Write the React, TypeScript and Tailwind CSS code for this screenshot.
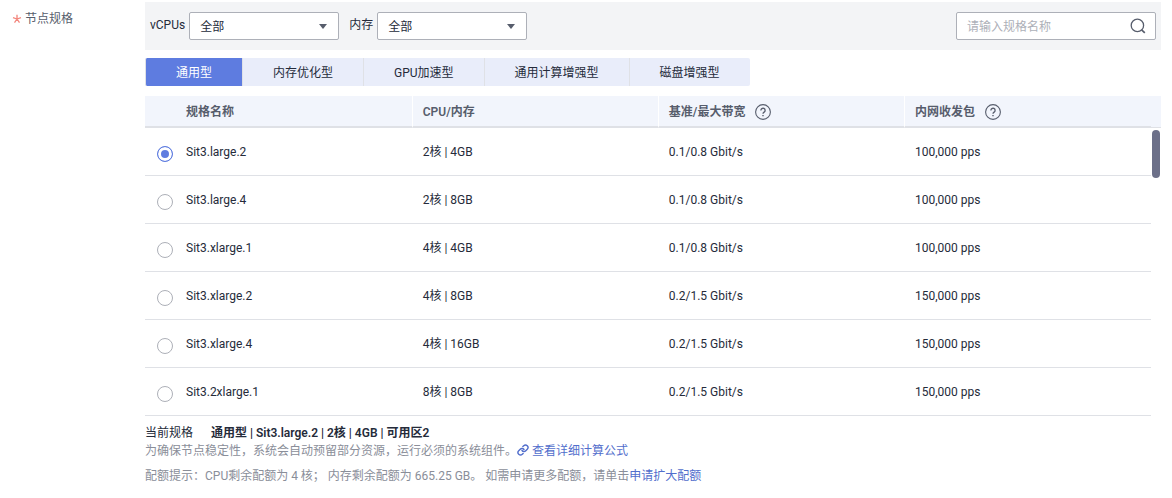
import { useState } from "react";
import type { ReactNode } from "react";

const TABS = ["通用型", "内存优化型", "GPU加速型", "通用计算增强型", "磁盘增强型"];

const SPECS = [
  { name: "Sit3.large.2", size: "2核 | 4GB", bandwidth: "0.1/0.8 Gbit/s", pps: "100,000 pps" },
  { name: "Sit3.large.4", size: "2核 | 8GB", bandwidth: "0.1/0.8 Gbit/s", pps: "100,000 pps" },
  { name: "Sit3.xlarge.1", size: "4核 | 4GB", bandwidth: "0.1/0.8 Gbit/s", pps: "100,000 pps" },
  { name: "Sit3.xlarge.2", size: "4核 | 8GB", bandwidth: "0.2/1.5 Gbit/s", pps: "150,000 pps" },
  { name: "Sit3.xlarge.4", size: "4核 | 16GB", bandwidth: "0.2/1.5 Gbit/s", pps: "150,000 pps" },
  { name: "Sit3.2xlarge.1", size: "8核 | 8GB", bandwidth: "0.2/1.5 Gbit/s", pps: "150,000 pps" },
];

function FilterSelect({ id, label }: { id: string; label: string }) {
  return (
    <div className="flex items-center gap-1">
      <label htmlFor={id} className="pb-0.5">
        {label}
      </label>
      <div className="relative">
        <select
          id={id}
          className="block h-7 w-[150px] appearance-none rounded-xs border border-[#adb0b8] bg-white pt-0.5 pr-7 pl-[10px] outline-none"
        >
          <option>全部</option>
        </select>
        <svg
          viewBox="0 0 8 5"
          className="pointer-events-none absolute top-3 right-3 h-[5px] w-2"
          fill="#575d6c"
          aria-hidden="true"
        >
          <path d="M0 0h8L4 5z" />
        </svg>
      </div>
    </div>
  );
}

function HelpButton({ label }: { label: string }) {
  return (
    <button type="button" aria-label={label} className="block size-4">
      <svg viewBox="0 0 16 16" className="size-4" fill="none" stroke="#575d6c" aria-hidden="true">
        <circle cx="8" cy="8" r="7.4" strokeWidth="1.1" />
        <path d="M5.900 6.400a2.100 2.100 0 1 1 3.400 1.600c-.8.6-1.300.9-1.300 1.800" strokeWidth="1.3" />
        <path d="M8 10.900v1.400" strokeWidth="1.4" />
      </svg>
    </button>
  );
}

function HeadCell({ children, help }: { children: ReactNode; help?: string }) {
  return (
    <th
      scope="col"
      className="h-8 border-r border-b-2 border-r-white border-b-[#dfe1e6] p-0 pt-px pl-[10px] text-left font-semibold nth-last-2:border-r-0"
    >
      <div className="flex items-center gap-[10px]">
        <span>{children}</span>
        {help && <HelpButton label={help} />}
      </div>
    </th>
  );
}

export default function App() {
  const [tab, setTab] = useState(0);
  const [picked, setPicked] = useState(0);

  return (
    <div className="flex bg-white pt-0.5 pr-[11px] font-['Roboto','Noto_Sans_CJK_SC',sans-serif] text-xs text-[#252b3a]">
      <div className="flex w-[145px] shrink-0 items-start gap-[3px] pt-[9px] pl-3 text-[#575d6c]">
        <svg viewBox="0 0 10 10" className="mt-[3px] size-[10px]" stroke="#f3857c" strokeWidth="1.3" aria-hidden="true">
          <path d="M5 .8V5M5 5L1 3.7M5 5l4-1.3M5 5L2.5 8.6M5 5l2.5 3.6" />
        </svg>
        <span>节点规格</span>
      </div>

      <main className="min-w-0 flex-1">
        <div className="flex h-12 items-center bg-[#f3f4f6] px-[5px]">
          <div className="flex flex-1 gap-[10px]">
            <FilterSelect id="vcpus" label="vCPUs" />
            <FilterSelect id="memory" label="内存" />
          </div>
          <div className="flex h-7 w-[200px] items-center rounded-xs border border-[#adb0b8] bg-white pr-[9px] pl-[10px]">
            <input
              type="text"
              aria-label="规格名称"
              placeholder="请输入规格名称"
              className="min-w-0 flex-1 pt-0.5 outline-none placeholder:text-[#adb0b8]"
            />
            <button type="button" aria-label="搜索">
              <svg viewBox="0 0 16 16" className="size-4" fill="none" stroke="#575d6c" strokeWidth="1.3" aria-hidden="true">
                <circle cx="7.4" cy="7.4" r="6.2" />
                <path d="M11.6 11.8l3.2 3" strokeWidth="1.7" />
              </svg>
            </button>
          </div>
        </div>

        <div role="tablist" className="mt-2 flex">
          {TABS.map((name, i) => (
            <button
              key={name}
              type="button"
              role="tab"
              aria-selected={i === tab}
              onClick={() => setTab(i)}
              className={
                i === tab
                  ? "h-7 border-l border-[#dfe1e6] bg-[#5e7ce0] px-[30px] pt-0.5 text-white first:rounded-l-xs last:rounded-r-xs"
                  : "h-7 border-l border-[#dfe1e6] bg-[#e9edfa] px-[30px] pt-0.5 first:rounded-l-xs last:rounded-r-xs"
              }
            >
              {name}
            </button>
          ))}
        </div>

        <table className="mt-[10px] w-full table-fixed border-separate border-spacing-0">
          <colgroup>
            <col className="w-[31px]" />
            <col className="w-[23.3%]" />
            <col />
            <col />
            <col />
            <col className="w-[10px]" />
          </colgroup>
          <thead className="bg-[#f2f5fc] text-[#575d6c]">
            <tr>
              <td className="border-b-2 border-[#dfe1e6]" />
              <HeadCell>规格名称</HeadCell>
              <HeadCell>CPU/内存</HeadCell>
              <HeadCell help="带宽说明">基准/最大带宽</HeadCell>
              <HeadCell help="收发包说明">内网收发包</HeadCell>
              <td className="border-b border-[#dfe1e6]" />
            </tr>
          </thead>
          <tbody>
            {SPECS.map((spec, i) => (
              <tr key={spec.name}>
                <td className="h-12 border-b border-[#dfe1e6] p-0 pt-1 pl-3">
                  <input
                    type="radio"
                    name="spec"
                    id={spec.name}
                    checked={i === picked}
                    onChange={() => setPicked(i)}
                    className="block size-4 appearance-none rounded-full border border-[#adb0b8] bg-white checked:border-[#5e7ce0] checked:bg-[#5e7ce0] checked:shadow-[inset_0_0_0_3px_white]"
                  />
                </td>
                <td className="border-b border-[#dfe1e6] p-0 pl-[10px]">
                  <label htmlFor={spec.name}>{spec.name}</label>
                </td>
                <td className="border-b border-[#dfe1e6] p-0 pl-[10px]">{spec.size}</td>
                <td className="border-b border-[#dfe1e6] p-0 pl-[10px]">{spec.bandwidth}</td>
                <td className="border-b border-[#dfe1e6] p-0 pl-[10px]">{spec.pps}</td>
                {i === 0 && (
                  <td rowSpan={SPECS.length} className="p-0 pt-0.5 pl-px align-top">
                    <div className="h-12 w-2 rounded-full bg-[#6c7089]" />
                  </td>
                )}
              </tr>
            ))}
          </tbody>
        </table>

        <div className="mt-2 flex gap-[18px] leading-[18px]">
          <span>当前规格</span>
          <span className="font-semibold">通用型 | Sit3.large.2 | 2核 | 4GB | 可用区2</span>
        </div>
        <p className="flex items-center leading-[18px] text-[#8a8e99]">
          <span>为确保节点稳定性，系统会自动预留部分资源，运行必须的系统组件。</span>
          <a href="#formula" className="flex items-center gap-[3px] text-[#526ecc]">
            <svg viewBox="0 0 24 24" className="mb-0.5 size-3" fill="none" stroke="currentColor" strokeWidth="2.8" strokeLinecap="round" aria-hidden="true">
              <path d="M10 13a5 5 0 0 0 7.540.540l3-3a5 5 0 0 0-7.070-7.070l-1.720 1.710" />
              <path d="M14 11a5 5 0 0 0-7.540-.540l-3 3a5 5 0 0 0 7.070 7.070l1.710-1.710" />
            </svg>
            查看详细计算公式
          </a>
        </p>
        <p className="mt-[7px] leading-[18px] text-[#8a8e99]">
          配额提示：CPU剩余配额为 4 核； 内存剩余配额为 665.25 GB。 如需申请更多配额，请单击
          <a href="#quota" className="text-[#526ecc]">
            申请扩大配额
          </a>
        </p>
      </main>
    </div>
  );
}
